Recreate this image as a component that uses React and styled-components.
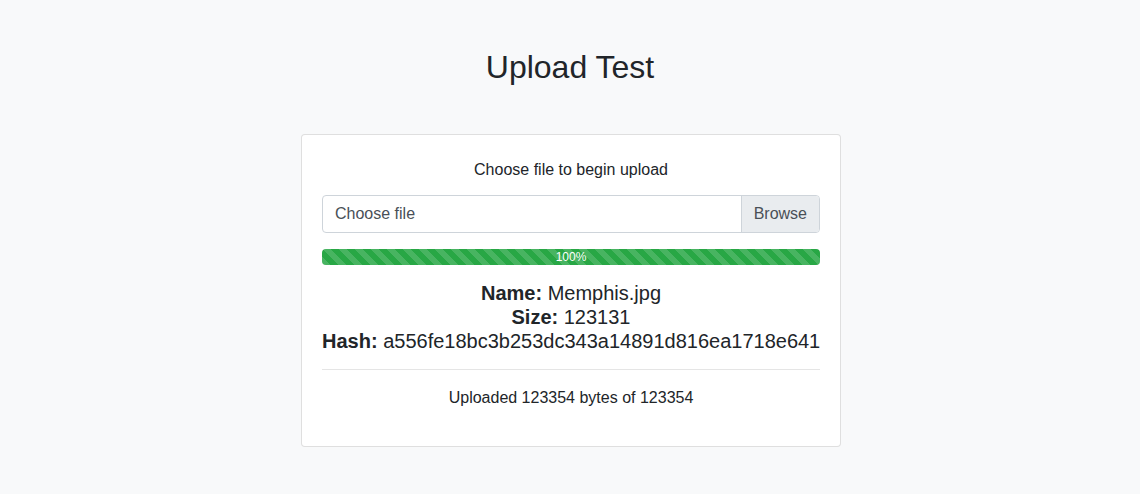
import React from "react";
import styled, { createGlobalStyle } from "styled-components";

const GlobalStyle = createGlobalStyle`
  * { box-sizing: border-box; }
  body {
    margin: 0;
    background: #f8f9fa;
    color: #212529;
    font-family: "Liberation Sans", Arial, sans-serif;
    font-size: 16px;
    line-height: 1.5;
  }
`;

const Page = styled.div`
  padding: 48px 15px;
  display: flex;
  flex-direction: column;
  align-items: center;
`;

const Title = styled.h2`
  margin: 0 0 48px;
  font-size: 32px;
  font-weight: 400;
  line-height: 1.2;
`;

const Card = styled.div`
  width: 540px;
  margin-left: 2px;
  background: #fff;
  border: 1px solid rgba(0, 0, 0, 0.125);
  border-radius: 4px;
  padding: 20px;
  text-align: center;
`;

const Prompt = styled.p`
  margin: 3px 0 13px;
`;

const Text = styled.p`
  margin: 0 0 16px;
`;

const FileInput = styled.div`
  display: flex;
  height: 38px;
  margin-bottom: 16px;
  border: 1px solid #ced4da;
  border-radius: 4px;
  overflow: hidden;
  color: #495057;
  text-align: left;
`;

const FileLabel = styled.div`
  flex: 1;
  padding: 6px 12px;
`;

const BrowseButton = styled.div`
  padding: 6px 12px;
  background: #e9ecef;
  border-left: 1px solid #ced4da;
`;

const Progress = styled.div`
  height: 16px;
  margin-bottom: 16px;
  background: #e9ecef;
  border-radius: 4px;
  overflow: hidden;
  display: flex;
`;

const Bar = styled.div`
  display: flex;
  align-items: center;
  justify-content: center;
  color: #fff;
  font-size: 12px;
  line-height: 1;
  background-color: #28a745;
  background-image: linear-gradient(
    45deg,
    rgba(255, 255, 255, 0.15) 25%,
    transparent 25%,
    transparent 50%,
    rgba(255, 255, 255, 0.15) 50%,
    rgba(255, 255, 255, 0.15) 75%,
    transparent 75%,
    transparent
  );
  background-size: 16px 16px;
`;

const Details = styled.div`
  font-size: 20px;
  line-height: 1.2;
  margin-bottom: 16px;
`;

const Line = styled.div`
  white-space: nowrap;
  b { font-weight: 700; }
`;

const Rule = styled.hr`
  margin: 0 0 16px;
  border: 0;
  border-top: 1px solid rgba(0, 0, 0, 0.1);
`;

export default function App() {
  const percent = 100;
  return (
    <>
      <GlobalStyle />
      <Page>
        <Title>Upload Test</Title>
        <Card>
          <Prompt>Choose file to begin upload</Prompt>
          <FileInput>
            <FileLabel>Choose file</FileLabel>
            <BrowseButton>Browse</BrowseButton>
          </FileInput>
          <Progress>
            <Bar style={{ width: `${percent}%` }}>{percent}%</Bar>
          </Progress>
          <Details>
            <Line><b>Name:</b> Memphis.jpg</Line>
            <Line><b>Size:</b> 123131</Line>
            <Line><b>Hash:</b> a556fe18bc3b253dc343a14891d816ea1718e641</Line>
          </Details>
          <Rule />
          <Text>Uploaded 123354 bytes of 123354</Text>
        </Card>
      </Page>
    </>
  );
}
